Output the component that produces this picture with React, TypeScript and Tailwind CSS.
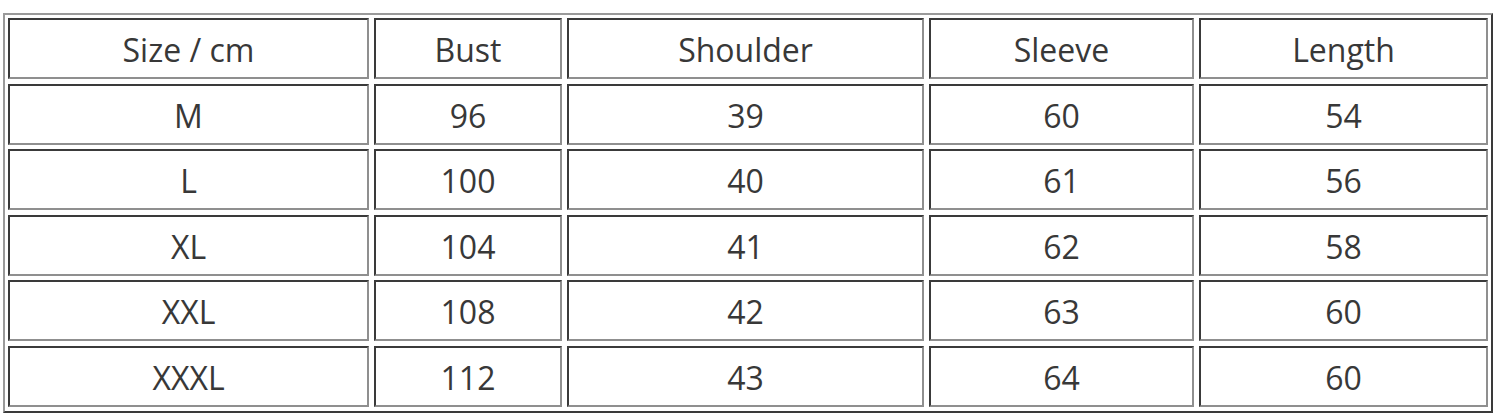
import React from "react";

const header = ["Size / cm", "Bust", "Shoulder", "Sleeve", "Length"];
const rows = [
  ["M", "96", "39", "60", "54"],
  ["L", "100", "40", "61", "56"],
  ["XL", "104", "41", "62", "58"],
  ["XXL", "108", "42", "63", "60"],
  ["XXXL", "112", "43", "64", "60"],
];

function Cell({ text }: { text: string }) {
  return (
    <div className="flex items-center justify-center border-2 border-t-[#3a3a3a] border-l-[#3a3a3a] border-b-[#8f8f8f] border-r-[#8f8f8f] pt-[3px] text-[32px] leading-none text-[#383838]">
      {text}
    </div>
  );
}

export default function App() {
  const all = [header, ...rows];
  return (
    <div className="w-[1500px] h-[418px] bg-white pt-[13px] pl-[3px]" style={{ fontFamily: '"Open Sans", "Noto Sans", sans-serif' }}>
      <div className="w-[1490px] h-[400px] border-2 border-t-[#9a9a9a] border-l-[#9a9a9a] border-b-[#3a3a3a] border-r-[#3a3a3a] pt-[3px] pl-[3px]">
        <div className="grid grid-cols-[361px_188px_357px_265px_289px] auto-rows-[61px] gap-x-[5px] gap-y-[4.5px]">
          {all.map((r, i) => r.map((t, j) => <Cell key={i + "-" + j} text={t} />))}
        </div>
      </div>
    </div>
  );
}
